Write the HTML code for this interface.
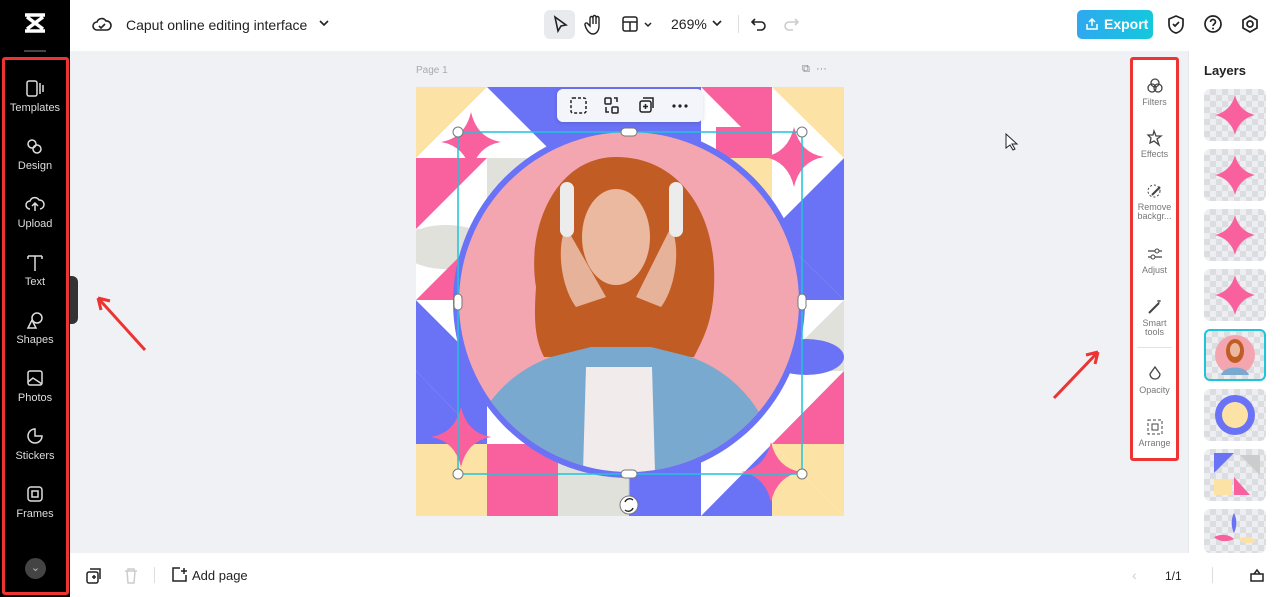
<!DOCTYPE html>
<html><head><meta charset="utf-8"><style>
*{margin:0;padding:0;box-sizing:border-box}
body{width:1280px;height:597px;overflow:hidden;font-family:"Liberation Sans",sans-serif;background:#eff1f4;position:relative}
.abs{position:absolute}
.side{left:0;top:0;width:70px;height:597px;background:#000}
.side .it{position:absolute;left:0;width:70px;text-align:center;color:#ddd;font-size:11px}
.side svg{display:block;margin:0 auto 3px}
.top{left:70px;top:0;width:1210px;height:51px;background:#fff}
.bot{left:70px;top:553px;width:1118px;height:44px;background:#fff}
.rp{left:1188px;top:51px;width:92px;height:502px;background:#fff;border-left:1px solid #e5e7eb}
.tools{left:1130px;top:57px;width:49px;height:404px;background:#fff;border:3px solid #e33;border-radius:3px}
.tools .t{position:absolute;left:0;width:43px;text-align:center;font-size:9px;color:#777;line-height:9px}
.tools svg{display:block;margin:0 auto 3px}
.thumb{position:absolute;left:1204px;width:62px;height:52px;border-radius:6px;overflow:hidden;background-color:#eceef1;background-image:linear-gradient(45deg,#dcdde0 25%,transparent 25%,transparent 75%,#dcdde0 75%),linear-gradient(45deg,#dcdde0 25%,transparent 25%,transparent 75%,#dcdde0 75%);background-size:12px 12px;background-position:0 0,6px 6px}
</style></head><body>
<div class="abs side">
 <svg class="abs" style="left:22px;top:12px" width="26" height="22" viewBox="0 0 26 22"><path d="M3 3h20M3 19h20M5 5l16 12M21 5L5 17" stroke="#fff" stroke-width="3.5" fill="none"/></svg>
 <div class="abs" style="left:24px;top:50px;width:22px;height:2px;background:#444"></div>
 <div class="abs" style="left:2px;top:57px;width:67px;height:538px;border:3px solid #e33;border-radius:3px"></div>
 <div class="it" style="top:79px"><svg width="20" height="20"><rect x="2" y="2" width="10" height="15" rx="2" stroke="#ddd" stroke-width="1.5" fill="none"/><path d="M15 4v11M18 6v7" stroke="#ddd" stroke-width="1.5"/></svg>Templates</div>
 <div class="it" style="top:137px"><svg width="20" height="20"><circle cx="7" cy="7" r="4" stroke="#ddd" stroke-width="1.5" fill="none"/><circle cx="12" cy="12" r="4" stroke="#ddd" stroke-width="1.5" fill="none"/></svg>Design</div>
 <div class="it" style="top:195px"><svg width="20" height="20"><path d="M5 14a4 4 0 010-8 5 5 0 019-1 4 4 0 011 9M10 16V9M7 11l3-3 3 3" stroke="#ddd" stroke-width="1.5" fill="none"/></svg>Upload</div>
 <div class="it" style="top:253px"><svg width="20" height="20"><path d="M3 3h14M10 3v15M3 3v3M17 3v3" stroke="#ddd" stroke-width="1.5" fill="none"/></svg>Text</div>
 <div class="it" style="top:311px"><svg width="20" height="20"><circle cx="12" cy="7" r="5" stroke="#ddd" stroke-width="1.5" fill="none"/><path d="M3 17l4-8 4 8z" stroke="#ddd" stroke-width="1.5" fill="none"/></svg>Shapes</div>
 <div class="it" style="top:369px"><svg width="20" height="20"><rect x="3" y="2" width="14" height="14" rx="2" stroke="#ddd" stroke-width="1.5" fill="none"/><path d="M3 13l5-4 9 6" stroke="#ddd" stroke-width="1.5" fill="none"/></svg>Photos</div>
 <div class="it" style="top:427px"><svg width="20" height="20"><path d="M10 2a7 7 0 107 7h-7z" stroke="#ddd" stroke-width="1.5" fill="none"/></svg>Stickers</div>
 <div class="it" style="top:485px"><svg width="20" height="20"><rect x="3" y="2" width="14" height="14" rx="3" stroke="#ddd" stroke-width="1.5" fill="none"/><rect x="7" y="6" width="6" height="6" stroke="#ddd" stroke-width="1.5" fill="none"/></svg>Frames</div>
 <div class="abs" style="left:25px;top:558px;width:21px;height:21px;border-radius:50%;background:#444;color:#bbb;font-size:11px;text-align:center;line-height:21px">⌄</div>
</div>
<div class="abs" style="left:70px;top:276px;width:8px;height:48px;background:#333;border-radius:0 6px 6px 0"></div>
<div class="abs top">
 <svg class="abs" style="left:22px;top:15px" width="20" height="18"><path d="M5 15a4 4 0 010-8 5 5 0 019-1 4 4 0 011 9z" stroke="#222" stroke-width="1.6" fill="none"/><path d="M7 11l2 2 4-4" stroke="#222" stroke-width="1.6" fill="none"/></svg>
 <div class="abs" style="left:56px;top:17px;font-size:14px;color:#222">Caput online editing interface</div>
 <svg class="abs" style="left:248px;top:18px" width="12" height="10"><path d="M2 3l4 4 4-4" stroke="#222" stroke-width="1.6" fill="none"/></svg>
 <div class="abs" style="left:474px;top:10px;width:31px;height:29px;background:#e8eaee;border-radius:6px"></div>
 <svg class="abs" style="left:482px;top:15px" width="18" height="20"><path d="M3 2l11 8-5 1-3 5z" stroke="#222" stroke-width="1.6" fill="none"/></svg>
 <svg class="abs" style="left:514px;top:14px" width="20" height="22"><path d="M6 12V4a1.5 1.5 0 013 0v6V3a1.5 1.5 0 013 0v7V4a1.5 1.5 0 013 0v8c0 5-3 8-6 8s-5-2-7-6l-1-3a1.5 1.5 0 013-1z" stroke="#222" stroke-width="1.4" fill="none"/></svg>
 <svg class="abs" style="left:551px;top:15px" width="34" height="20"><rect x="2" y="2" width="14" height="14" rx="2" stroke="#222" stroke-width="1.5" fill="none"/><path d="M2 7h14M9 7v9M24 8l3 3 3-3" stroke="#222" stroke-width="1.5" fill="none"/></svg>
 <div class="abs" style="left:601px;top:16px;font-size:14px;color:#222">269%</div>
 <svg class="abs" style="left:641px;top:18px" width="12" height="10"><path d="M2 3l4 4 4-4" stroke="#222" stroke-width="1.6" fill="none"/></svg>
 <div class="abs" style="left:668px;top:15px;width:1px;height:18px;background:#ddd"></div>
 <svg class="abs" style="left:680px;top:15px" width="18" height="18"><path d="M5 4L2 7l3 3M2 7h9a4 4 0 010 8H7" stroke="#222" stroke-width="1.6" fill="none"/></svg>
 <svg class="abs" style="left:712px;top:15px" width="18" height="18"><path d="M13 4l3 3-3 3M16 7H7a4 4 0 000 8h4" stroke="#ccc" stroke-width="1.6" fill="none"/></svg>
 <div class="abs" style="left:1007px;top:10px;width:76px;height:29px;border-radius:5px;background:linear-gradient(90deg,#2fa8f0,#14c8dc);color:#fff;font-weight:bold;font-size:14px;line-height:29px;padding-left:27px">Export</div>
 <svg class="abs" style="left:1015px;top:17px" width="14" height="14"><path d="M2 7v5h10V7M7 9V2M4 5l3-3 3 3" stroke="#fff" stroke-width="1.5" fill="none"/></svg>
 <svg class="abs" style="left:1096px;top:14px" width="20" height="22"><path d="M10 2l7 3v5c0 5-3 8-7 9-4-1-7-4-7-9V5z" stroke="#222" stroke-width="1.7" fill="none"/><path d="M7 10l2 2 4-4" stroke="#222" stroke-width="1.7" fill="none"/></svg>
 <svg class="abs" style="left:1133px;top:14px" width="20" height="20"><circle cx="10" cy="10" r="8" stroke="#222" stroke-width="1.7" fill="none"/><path d="M7.5 8a2.5 2.5 0 115 0c0 2-2.5 2-2.5 4" stroke="#222" stroke-width="1.7" fill="none"/><circle cx="10" cy="14.5" r="1" fill="#222"/></svg>
 <svg class="abs" style="left:1170px;top:14px" width="20" height="20"><path d="M10 2l7 4v8l-7 4-7-4V6z" stroke="#222" stroke-width="1.7" fill="none"/><circle cx="10" cy="10" r="3" stroke="#222" stroke-width="1.7" fill="none"/></svg>
</div>
<div class="abs" style="left:416px;top:65px;font-size:10px;color:#aaa">Page 1</div>
<div class="abs" style="left:802px;top:63px;font-size:11px;color:#888">⧉ &nbsp;···</div>
<svg class="abs" style="left:416px;top:87px" width="428" height="429" viewBox="0 0 428 429">
 <rect width="428" height="429" fill="#fff"/>
 <path d="M0 0h71L0 71z" fill="#fde2a6"/><path d="M71 0h71v71z" fill="#6a72f5"/>
 <path d="M142 0h143v71H142z" fill="#6a72f5"/><path d="M285 0h71v71z" fill="#f9609e"/>
 <path d="M356 0h72v71z" fill="#fde2a6"/><path d="M300 40h56v31h-56z" fill="#f9609e"/>
 <path d="M0 71h71L0 142z" fill="#f9609e"/><path d="M71 71h71L71 142z" fill="#e1e1dc"/>
 <path d="M285 71h71v71z" fill="#fde2a6"/><path d="M428 71v71h-71z" fill="#6a72f5"/><path d="M356 71h72L356 142z" fill="#fff"/>
 <ellipse cx="30" cy="160" rx="45" ry="22" fill="#e1e1dc"/>
 <path d="M0 142h71v71z" fill="#e1e1dc"/><path d="M71 142v71H0z" fill="#f9609e"/>
 <path d="M356 142h72v71z" fill="#6a72f5"/><path d="M356 142v71h72z" fill="#6a72f5"/>
 <path d="M0 213v71h71z" fill="#6a72f5"/><path d="M0 213h71v71z" fill="#fff"/><path d="M0 230l60 54H0z" fill="#6a72f5"/>
 <path d="M356 213h72v71h-72z" fill="#e1e1dc"/><path d="M356 213h72L356 284z" fill="#fff"/>
 <path d="M0 284h71v73z" fill="#6a72f5"/><path d="M0 284v73h71z" fill="#6a72f5"/><path d="M0 357h71L0 300z" fill="#6a72f5"/>
 <path d="M356 284h72v73h-72z" fill="#f9609e"/><path d="M356 284h72L356 357z" fill="#fff"/>
 <ellipse cx="390" cy="270" rx="38" ry="18" fill="#6a72f5"/>
 <path d="M0 357h71v72z" fill="#fde2a6"/><path d="M0 357v72h71z" fill="#fde2a6"/><path d="M0 357l71 72H0z" fill="#fde2a6"/>
 <path d="M71 357h71v72H71z" fill="#f9609e"/><path d="M71 357h71L71 429z" fill="#f9609e"/>
 <path d="M142 357h71v72h-71z" fill="#e1e1dc"/><path d="M213 357h143v72H213z" fill="#6a72f5"/>
 <path d="M285 357h71L285 429z" fill="#fff"/>
 <path d="M356 357h72v72z" fill="#fde2a6"/><path d="M356 357v72h72z" fill="#fde2a6"/>
 <circle cx="213" cy="215" r="176" fill="#6a72f5"/>
 <circle cx="213" cy="215" r="170" fill="#f4a6b0"/>
 <clipPath id="c"><circle cx="213" cy="215" r="170"/></clipPath>
 <g clip-path="url(#c)">
  <path d="M120 200c-10-60 20-130 80-130s95 50 98 110c2 50-10 70-20 90l-150 0c-10-20-10-40-8-70z" fill="#c15d24"/>
  <ellipse cx="200" cy="150" rx="34" ry="48" fill="#eab9a0"/>
  <path d="M150 140c-10 20-5 60 10 80l30-10z" fill="#e6b39a"/>
  <path d="M255 140c10 20 5 60-10 80l-25-10z" fill="#e6b39a"/>
  <path d="M40 420c5-80 40-130 95-150l40-10h60l40 10c55 20 90 70 95 150z" fill="#7aa9cf"/>
  <path d="M170 280h66l4 140h-74z" fill="#f1eceb"/>
  <rect x="144" y="95" width="14" height="55" rx="7" fill="#ececec"/><rect x="253" y="95" width="14" height="55" rx="7" fill="#ececec"/>
 </g>
 <path d="M55 25q6 26 30 30-24 4-30 30-6-26-30-30 24-4 30-30z" fill="#f9609e"/>
 <path d="M378 40q6 26 30 30-24 4-30 30-6-26-30-30 24-4 30-30z" fill="#f9609e"/>
 <path d="M45 320q6 26 30 30-24 4-30 30-6-26-30-30 24-4 30-30z" fill="#f9609e"/>
 <path d="M355 355q6 26 30 30-24 4-30 30-6-26-30-30 24-4 30-30z" fill="#f9609e"/>
 <rect x="42" y="45" width="344" height="342" fill="none" stroke="#1fc4d8" stroke-width="1.5"/>
 <path d="M213 391v18" stroke="#ccc"/>
 <g fill="#fff" stroke="#777"><circle cx="42" cy="45" r="5"/><circle cx="386" cy="45" r="5"/><circle cx="42" cy="387" r="5"/><circle cx="386" cy="387" r="5"/>
 <rect x="205" y="41" width="16" height="8" rx="4"/><rect x="205" y="383" width="16" height="8" rx="4"/><rect x="38" y="207" width="8" height="16" rx="4"/><rect x="382" y="207" width="8" height="16" rx="4"/>
 <circle cx="213" cy="418" r="9"/></g>
 <path d="M209 415a5 5 0 018-2M217 421a5 5 0 01-8 2" stroke="#222" stroke-width="1.4" fill="none"/>
</svg>
<div class="abs" style="left:557px;top:89px;width:146px;height:33px;background:#f4f5fb;border-radius:6px;box-shadow:0 1px 4px rgba(0,0,0,.15)"></div>
<svg class="abs" style="left:566px;top:95px" width="130" height="22">
 <rect x="5" y="3" width="15" height="15" rx="2" stroke="#222" stroke-width="1.5" fill="none" stroke-dasharray="3 2"/>
 <rect x="39" y="3" width="6" height="6" rx="1" stroke="#222" stroke-width="1.5" fill="none"/><rect x="46" y="12" width="6" height="6" rx="1" stroke="#222" stroke-width="1.5" fill="none"/><path d="M48 3h3v4M40 12v5h3" stroke="#222" stroke-width="1.5" fill="none"/>
 <rect x="74" y="6" width="11" height="11" rx="2" stroke="#222" stroke-width="1.5" fill="none"/><path d="M77 3h10v10M79.5 9v5M77 11.5h5" stroke="#222" stroke-width="1.5" fill="none"/>
 <circle cx="108" cy="11" r="1.6" fill="#222"/><circle cx="114" cy="11" r="1.6" fill="#222"/><circle cx="120" cy="11" r="1.6" fill="#222"/>
</svg>
<svg class="abs" style="left:1004px;top:132px" width="16" height="20"><path d="M2 2v14l4-3 3 5 2-1-3-5h5z" fill="#fff" stroke="#222"/></svg>
<svg class="abs" style="left:90px;top:290px" width="60" height="64"><path d="M55 60L8 8M8 8l3 12M8 8l12 3" stroke="#e33" stroke-width="3" fill="none"/></svg>
<svg class="abs" style="left:1050px;top:348px" width="54" height="54"><path d="M4 50L48 4M48 4l-12 3M48 4l-3 12" stroke="#e33" stroke-width="3" fill="none"/></svg>
<div class="abs tools">
 <div class="t" style="top:17px"><svg width="18" height="18"><circle cx="9" cy="6" r="4" stroke="#444" fill="none" stroke-width="1.3"/><circle cx="6" cy="11" r="4" stroke="#444" fill="none" stroke-width="1.3"/><circle cx="12" cy="11" r="4" stroke="#444" fill="none" stroke-width="1.3"/></svg>Filters</div>
 <div class="t" style="top:69px"><svg width="18" height="18"><path d="M8 2l2 5 5 0-4 3 2 6-5-4-4 2 1-5-3-3h5z" stroke="#444" fill="none" stroke-width="1.3"/></svg>Effects</div>
 <div class="t" style="top:122px"><svg width="18" height="18"><circle cx="8" cy="9" r="6" stroke="#444" fill="none" stroke-dasharray="2 2"/><path d="M6 13l8-8" stroke="#444" stroke-width="2"/></svg>Remove<br>backgr...</div>
 <div class="t" style="top:185px"><svg width="18" height="18"><path d="M2 6h14M2 12h14" stroke="#444" stroke-width="1.3"/><circle cx="11" cy="6" r="2" fill="#fff" stroke="#444"/><circle cx="7" cy="12" r="2" fill="#fff" stroke="#444"/></svg>Adjust</div>
 <div class="t" style="top:238px"><svg width="18" height="18"><path d="M3 15l10-10" stroke="#444" stroke-width="2"/><path d="M13 2v3M11 3h4" stroke="#444"/></svg>Smart<br>tools</div>
 <div class="abs" style="left:4px;top:287px;width:35px;height:1px;background:#e3e3e3"></div>
 <div class="t" style="top:305px"><svg width="18" height="18"><path d="M9 2l5 7a5 5 0 11-10 0z" stroke="#444" fill="none" stroke-width="1.3"/></svg>Opacity</div>
 <div class="t" style="top:358px"><svg width="18" height="18"><rect x="2" y="2" width="14" height="14" stroke="#444" fill="none" stroke-dasharray="3 2"/><rect x="6" y="6" width="6" height="6" stroke="#444" fill="none"/></svg>Arrange</div>
</div>
<div class="abs rp"><div class="abs" style="left:15px;top:12px;font-size:13px;font-weight:bold;color:#222">Layers</div></div>
<div class="thumb" style="top:89px"><svg width="62" height="52"><path d="M31 6q4 16 20 20-16 4-20 20-4-16-20-20 16-4 20-20z" fill="#f9609e"/></svg></div>
<div class="thumb" style="top:149px"><svg width="62" height="52"><path d="M31 6q4 16 20 20-16 4-20 20-4-16-20-20 16-4 20-20z" fill="#f9609e"/></svg></div>
<div class="thumb" style="top:209px"><svg width="62" height="52"><path d="M31 6q4 16 20 20-16 4-20 20-4-16-20-20 16-4 20-20z" fill="#f9609e"/></svg></div>
<div class="thumb" style="top:269px"><svg width="62" height="52"><path d="M31 6q4 16 20 20-16 4-20 20-4-16-20-20 16-4 20-20z" fill="#f9609e"/></svg></div>
<div class="thumb" style="top:329px;border:2px solid #1fc4d8"><svg width="58" height="48"><circle cx="29" cy="24" r="20" fill="#f4a6b0"/><ellipse cx="29" cy="20" rx="9" ry="12" fill="#c15d24"/><ellipse cx="29" cy="19" rx="5" ry="7" fill="#eab9a0"/><path d="M15 44c3-10 25-10 28 0z" fill="#7aa9cf"/></svg></div>
<div class="thumb" style="top:389px"><svg width="62" height="52"><circle cx="31" cy="26" r="20" fill="#6a72f5"/><circle cx="31" cy="26" r="13" fill="#fde2a6"/></svg></div>
<div class="thumb" style="top:449px"><svg width="62" height="52"><path d="M10 4h20L10 24z" fill="#6a72f5"/><path d="M30 28l16 18H30z" fill="#f9609e"/><path d="M10 30h18v16H10z" fill="#fde2a6"/><path d="M36 6h20v20z" fill="#ccc"/></svg></div>
<div class="thumb" style="top:509px;height:44px"><svg width="62" height="44"><path d="M30 4c-4 8-2 16 0 20 2-4 4-12 0-20z" fill="#6a72f5"/><path d="M10 28c8-4 16-2 20 2-8 4-16 2-20-2z" fill="#f9609e"/><path d="M34 30c8-4 14-2 18 2-6 4-14 2-18-2z" fill="#fde2a6"/></svg></div>
<div class="abs bot">
 <svg class="abs" style="left:15px;top:14px" width="18" height="18"><rect x="2" y="5" width="11" height="11" rx="2" stroke="#222" fill="none" stroke-width="1.5"/><path d="M5 2h10v10M7 10h4M9 8v4" stroke="#222" fill="none" stroke-width="1.5"/></svg>
 <svg class="abs" style="left:53px;top:14px" width="16" height="18"><path d="M2 4h12M5 4V2h6v2M4 4l1 12h6l1-12" stroke="#ccc" fill="none" stroke-width="1.5"/></svg>
 <div class="abs" style="left:84px;top:14px;width:1px;height:16px;background:#ddd"></div>
 <svg class="abs" style="left:100px;top:13px" width="18" height="18"><path d="M10 2H3v13h13V9M14 2v6M11 5h6" stroke="#222" fill="none" stroke-width="1.5"/></svg>
 <div class="abs" style="left:122px;top:15px;font-size:13px;color:#222">Add page</div>
 <div class="abs" style="left:1062px;top:14px;font-size:14px;color:#ccc">‹</div>
 <div class="abs" style="left:1095px;top:16px;font-size:12px;color:#222">1/1</div>
 <div class="abs" style="left:1133px;top:14px;font-size:14px;color:#ccc">›</div>
</div>
<div class="abs" style="left:1188px;top:553px;width:92px;height:44px;background:#fff"><div class="abs" style="left:24px;top:14px;width:1px;height:16px;background:#ddd"></div><svg class="abs" style="left:61px;top:14px" width="16" height="16"><rect x="2" y="7" width="12" height="7" stroke="#222" fill="none" stroke-width="1.5"/><path d="M5 7l3-4 3 4" stroke="#222" fill="none" stroke-width="1.5"/></svg></div>
</body></html>
